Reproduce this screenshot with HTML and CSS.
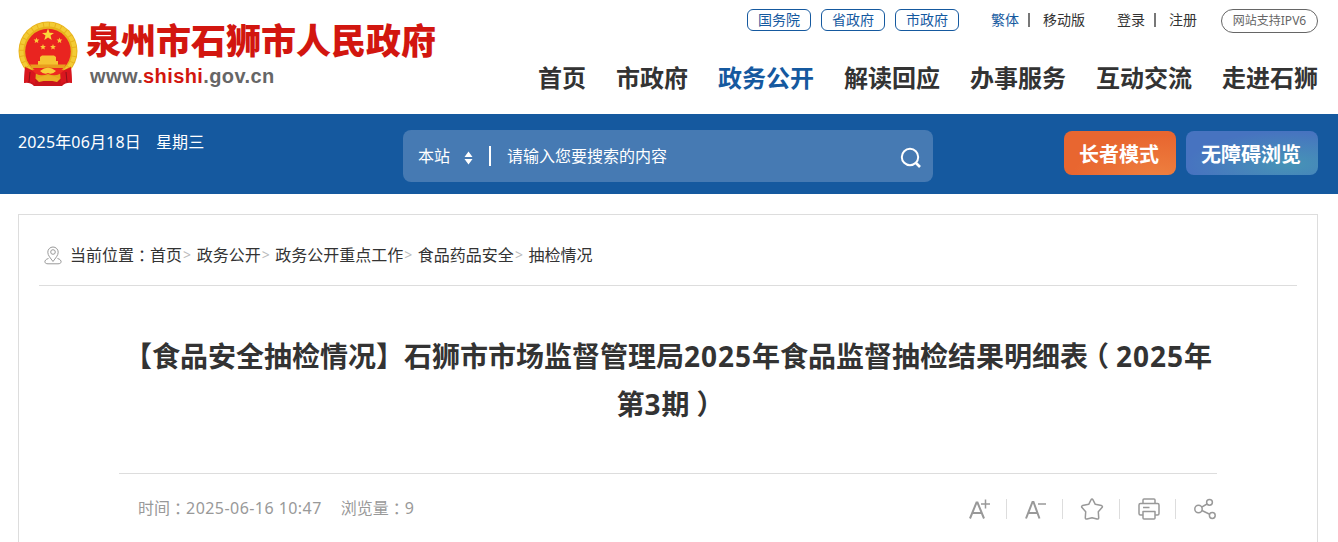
FILE: index.html
```html
<!doctype html>
<html lang="zh-CN">
	<head>
		<title>泉州市石狮市人民政府</title>
		<meta charset="UTF-8">
		<meta name="viewport" content="width=device-width, initial-scale=1.0">
		<link rel="stylesheet" href="styles.css">
	</head>

	<body>
		<header class="header">
			<a class="logo">
				<svg class="emblem" width="60" height="66" viewBox="0 0 60 66">
					<path d="M7 46 L6 62 Q12 61 16 65 H44 Q48 61 54 62 L53 46Z" fill="#c8141c" />
					<circle cx="30" cy="30" r="29.5" fill="#e8b21c" />
					<circle cx="30" cy="30" r="26.500" fill="none" stroke="#f3cb35" stroke-width="4" stroke-dasharray="5 1" />
					<circle cx="30" cy="30.500" r="22.800" fill="#e92420" />
					<path d="M30 7.500 l1.600 4.200 4.400.2 -3.500 2.700 1.200 4.300 -3.700-2.400 -3.700 2.400 1.200-4.300 -3.500-2.700 4.400-.2Z" fill="#fbd83c" />
					<g fill="#fbc93a">
						<path id="star" d="M18.500 16.500 l.8 2 2.100.1 -1.600 1.400 .5 2.100 -1.800-1.200 -1.800 1.200 .5-2.100 -1.600-1.400 2.100-.1Z" />
						<use href="#star" x="23" />
						<use href="#star" x="6.500" y="6.500" />
						<use href="#star" x="16.500" y="6.500" />
					</g>
					<path d="M22 36 L24 34.500 H36 L38 36 V40 H40 V44 H20 V40 H22Z" fill="#f5c331" />
					<path d="M12 43.500 H48 L46 47 H14Z" fill="#e99d1d" />
					<path d="M7 45 Q30 60 53 45 L51 54 Q30 66 9 54Z" fill="#e4ad1d" />
					<path d="M7 46 L18 51 L17 63 Q12 59 6 62Z M53 46 L42 51 L43 63 Q48 59 54 62Z" fill="#d9161e" />
					<path d="M14 49 Q30 44 46 49 Q40 57 30 53 Q20 57 14 49Z" fill="#ee2a20" />
					<path d="M22 50 Q30 43 38 50 Q34 54 30 52 Q26 54 22 50Z" fill="#f8cf3a" />
					<path d="M18 58 Q30 51 42 58 L39 61 Q30 58 21 61Z" fill="#edb225" />
					<path d="M12 51 L11 61 M48 51 L49 61" stroke="#8e1019" stroke-width="1" />
				</svg>
				<span class="logo-text">
					<span class="logo-name">泉州市石狮市人民政府</span>
					<span class="logo-url">www.<em>shishi</em>.gov.cn</span>
				</span>
			</a>

			<div class="header-right">
				<div class="top-links">
					<a class="pill">国务院</a>
					<a class="pill">省政府</a>
					<a class="pill">市政府</a>
					<span class="link-pair lang"><a class="blue">繁体</a><i></i><a>移动版</a></span>
					<span class="link-pair user"><a>登录</a><i></i><a>注册</a></span>
					<span class="ipv6">网站支持IPV6</span>
				</div>
				<nav class="nav">
					<a>首页</a>
					<a>市政府</a>
					<a class="active">政务公开</a>
					<a>解读回应</a>
					<a>办事服务</a>
					<a>互动交流</a>
					<a>走进石狮</a>
				</nav>
			</div>
		</header>

		<div class="bar">
			<div class="date"><span>2025年06月18日</span><span>星期三</span></div>
			<div class="search">
				<span class="scope">本站</span>
				<svg class="sort" width="9" height="14" viewBox="0 0 9 14">
					<path d="M4.500 0.500 L8.500 6 H0.500Z M0.500 8 H8.500 L4.500 13.500Z" fill="#fff" />
				</svg>
				<i class="search-line"></i>
				<span class="placeholder">请输入您要搜索的内容</span>
				<svg class="search-icon" width="22" height="22" viewBox="0 0 22 22" fill="none" stroke="#fff" stroke-width="2">
					<circle cx="10" cy="10" r="8.200" />
					<path d="M15.500 15.500 L20 20" stroke-width="2.600" />
				</svg>
			</div>
			<div class="modes">
				<a class="mode elder">长者模式</a>
				<a class="mode access">无障碍浏览</a>
			</div>
		</div>

		<main class="panel">
			<div class="crumbs">
				<svg width="18" height="19" viewBox="0 0 18 19" fill="none" stroke="#999">
					<path d="M9 15.500 C6.500 12 3.800 9.500 3.800 6.200 A5.200 5.200 0 0 1 14.200 6.200 C14.200 9.500 11.500 12 9 15.500Z" />
					<circle cx="9" cy="6" r="2.300" />
					<path d="M4.500 12.500 C0 13.500 -.5 17.800 4 17.800 H14 C18.500 17.800 18 13.500 13.500 12.500" />
				</svg>
				<span>当前位置<span class="mid" lang="zh-TW">：</span></span>
				<a>首页</a><i>&gt;</i>
				<a>政务公开</a><i>&gt;</i>
				<a>政务公开重点工作</a><i>&gt;</i>
				<a>食品药品安全</a><i>&gt;</i>
				<a>抽检情况</a>
			</div>

			<article class="article">
				<h1>【食品安全抽检情况】石狮市市场监督管理局<span class="num">2025</span>年食品监督抽检结果明细表<span class="open">（</span><span class="num">2025</span>年<br>第<span class="num">3</span>期<span class="close">）</span></h1>

				<div class="meta">
					<span class="time">时间<span class="mid" lang="zh-TW">：</span><span class="stamp">2025-06-16 10:47</span></span>
					<span>浏览量<span class="mid" lang="zh-TW">：</span>9</span>
					<div class="tools">
						<a>
							<svg width="24" height="24" viewBox="0 0 24 24" fill="none" stroke="#999" stroke-width="2">
								<path d="M3 21.500 L9.500 5.500 H10.500 L17 21.500 M5.500 16 H14.500" />
								<path d="M14 7 H23 M18.500 2.500 V11.500" stroke-width="1.500" />
							</svg>
						</a>
						<a>
							<svg width="24" height="24" viewBox="0 0 24 24" fill="none" stroke="#999" stroke-width="2">
								<path d="M2 21.500 L8.500 5 H9.500 L15.500 21.500 M4.500 16 H13.300" />
								<path d="M14 7 H22" stroke-width="1.500" />
							</svg>
						</a>
						<a>
							<svg width="24" height="24" viewBox="0 0 24 24" fill="none" stroke="#999" stroke-width="1.500" stroke-linejoin="round">
								<path d="M12 2 Q12.600 2 13 2.800 L15.300 7.300 L21.500 8.600 Q23 9.300 22 10.600 L18.300 14.800 L18.700 20.800 Q18.500 22.500 17 22 L12 20.800 L7 22 Q5.500 22.500 5.300 20.800 L5.700 14.800 L2 10.600 Q1 9.300 2.500 8.600 L8.700 7.300 L11 2.800 Q11.400 2 12 2Z" />
							</svg>
						</a>
						<a>
							<svg width="24" height="24" viewBox="0 0 24 24" fill="none" stroke="#999" stroke-width="1.500" stroke-linejoin="round">
								<path d="M6 6.500 V3 Q6 2 7 2 H17 Q18 2 18 3 V6.500" />
								<path d="M6 18 H3.500 Q2 18 2 16.500 V8 Q2 6.500 3.500 6.500 H20.500 Q22 6.500 22 8 V16.500 Q22 18 20.500 18 H18" />
								<path d="M6 14.500 H18 V21 Q18 22 17 22 H7 Q6 22 6 21Z M6 10.500 H12.500" />
							</svg>
						</a>
						<a>
							<svg width="24" height="24" viewBox="0 0 24 24" fill="none" stroke="#999" stroke-width="1.500">
								<circle cx="5.500" cy="12" r="3.700" />
								<circle cx="16.500" cy="5.300" r="2.900" />
								<circle cx="19.300" cy="18.500" r="2.900" />
								<path d="M8.700 10.200 L14 7 M8.900 13.500 L16.700 17.200" />
							</svg>
						</a>
					</div>
				</div>
			</article>
		</main>
	</body>
</html>
```
FILE: styles.css
```css
* {
	padding: 0;
	margin: 0;
	box-sizing: border-box;
}

body {
	font-family: "Noto Sans", "Noto Sans CJK SC", sans-serif;
	font-size: 16px;
	color: #333;
	background: #fff;
}

i, em {
	font-style: normal;
}

svg {
	display: block;
	flex: none;
}

/* full-width punctuation centred in its cell */
.mid {
	font-family: "Noto Sans CJK TC", sans-serif;
	line-height: 1;
	vertical-align: -1px;
}

.open {
	margin: 0 7px 0 -7px;
}

.close {
	margin: 0 -5px 0 7px;
}

.header {
	display: flex;
	justify-content: space-between;
	height: 114px;
	padding: 0 20px 0 18px;
}

.logo {
	display: flex;
	padding-top: 21px;
}

.logo-text {
	display: flex;
	flex-direction: column;
	padding-left: 8px;
}

.logo-name {
	font-family: "Liberation Sans", "Noto Sans CJK SC", sans-serif;
	font-size: 35px;
	font-weight: 900;
	line-height: 42px;
	height: 43px;
	color: #d2160f;
}

.logo-url {
	padding-left: 4px;
	font-family: "Liberation Sans", sans-serif;
	font-size: 20px;
	font-weight: bold;
	letter-spacing: 0.4px;
	line-height: 24px;
	color: #666;
}

.logo-url em {
	color: #d2160f;
}

.header-right {
	display: flex;
	flex-direction: column;
	align-items: flex-end;
	padding-top: 9px;
}

.top-links {
	display: flex;
	height: 24px;
	font-size: 14px;
	line-height: 22px;
}

.pill {
	width: 64px;
	height: 22px;
	margin-right: 10px;
	border: 1px solid #15599f;
	border-radius: 6px;
	line-height: 20px;
	text-align: center;
	color: #15599f;
}

.link-pair {
	display: flex;
	align-items: center;
	height: 22px;
}

.link-pair i {
	width: 2px;
	height: 14px;
	margin: 0 12px 0 9px;
	background: #777;
}

.lang {
	margin-left: 22px;
}

.user {
	margin: 0 24px 0 32px;
}

.user i {
	margin-right: 13px;
}

.lang i {
	margin-right: 13px;
}

.blue {
	color: #15599f;
}

.ipv6 {
	width: 97px;
	height: 24px;
	border: 1px solid #666;
	border-radius: 12px;
	font-size: 12px;
	line-height: 22px;
	text-align: center;
	color: #666;
}

.nav {
	display: flex;
	gap: 30px;
	padding-top: 27px;
	font-size: 24px;
	font-weight: bold;
	line-height: 36px;
}

.active {
	color: #15599f;
}

.bar {
	display: flex;
	height: 80px;
	padding: 16px 20px 0 18px;
	background: #15599f;
	color: #fff;
}

.date {
	display: flex;
	gap: 15px;
	width: 385px;
	letter-spacing: 0.15px;
	line-height: 24px;
}

.search {
	display: flex;
	align-items: center;
	width: 530px;
	height: 52px;
	padding: 0 11px 0 15px;
	border-radius: 8px;
	background: #467ab3;
}

.scope, .placeholder {
	padding-bottom: 2px;
}

.sort {
	margin: 3px 16px 0 14px;
}

.search-line {
	width: 2px;
	height: 20px;
	margin-right: 16px;
	background: #fff;
}

.search-icon {
	margin: 4px 0 0 auto;
}

.modes {
	display: flex;
	gap: 10px;
	margin-left: auto;
	padding-top: 1px;
}

.mode {
	height: 44px;
	padding: 0 17px 0 15px;
	border-radius: 8px;
	font-size: 20px;
	font-weight: bold;
	line-height: 47px;
}

.elder {
	background: radial-gradient(ellipse at 85% 110%, #ee8140, #e86630 65%);
}

.access {
	background: radial-gradient(ellipse at 78% 75%, #4694b6, #4773c0 70%);
}

.panel {
	height: 328px;
	margin: 20px 20px 0 18px;
	padding: 0 20px;
	border: 1px solid #ddd;
	border-bottom: 0;
}

.crumbs {
	display: flex;
	align-items: center;
	height: 71px;
	padding: 7px 0 0 5px;
	border-bottom: 1px solid #ddd;
}

.crumbs svg {
	margin: 3px 8px 0 0;
}

.crumbs i {
	width: 14.600px;
	padding: 2px 0 0 1px;
	font-size: 14px;
	color: #bbb;
}

.article {
	padding: 46px 80px 0;
}

.article h1 {
	height: 141px;
	font-size: 28px;
	line-height: 48px;
	text-align: center;
	white-space: nowrap;
}

.num {
	letter-spacing: 1px;
}

.meta {
	display: flex;
	align-items: center;
	height: 68px;
	padding-left: 19px;
	border-top: 1px solid #ddd;
	color: #999;
}

.meta > span {
	padding-bottom: 2px;
}

.time {
	margin-right: 19px;
}

.stamp {
	letter-spacing: 0.450px;
}

.tools {
	display: flex;
	margin-left: auto;
	padding-top: 2px;
}

.tools a {
	display: flex;
	align-items: center;
	height: 20px;
	padding-left: 17px;
	padding-right: 14.400px;
	border-right: 1px solid #ddd;
}

.tools a:last-child {
	padding-right: 0;
	border-right: 0;
}
```
